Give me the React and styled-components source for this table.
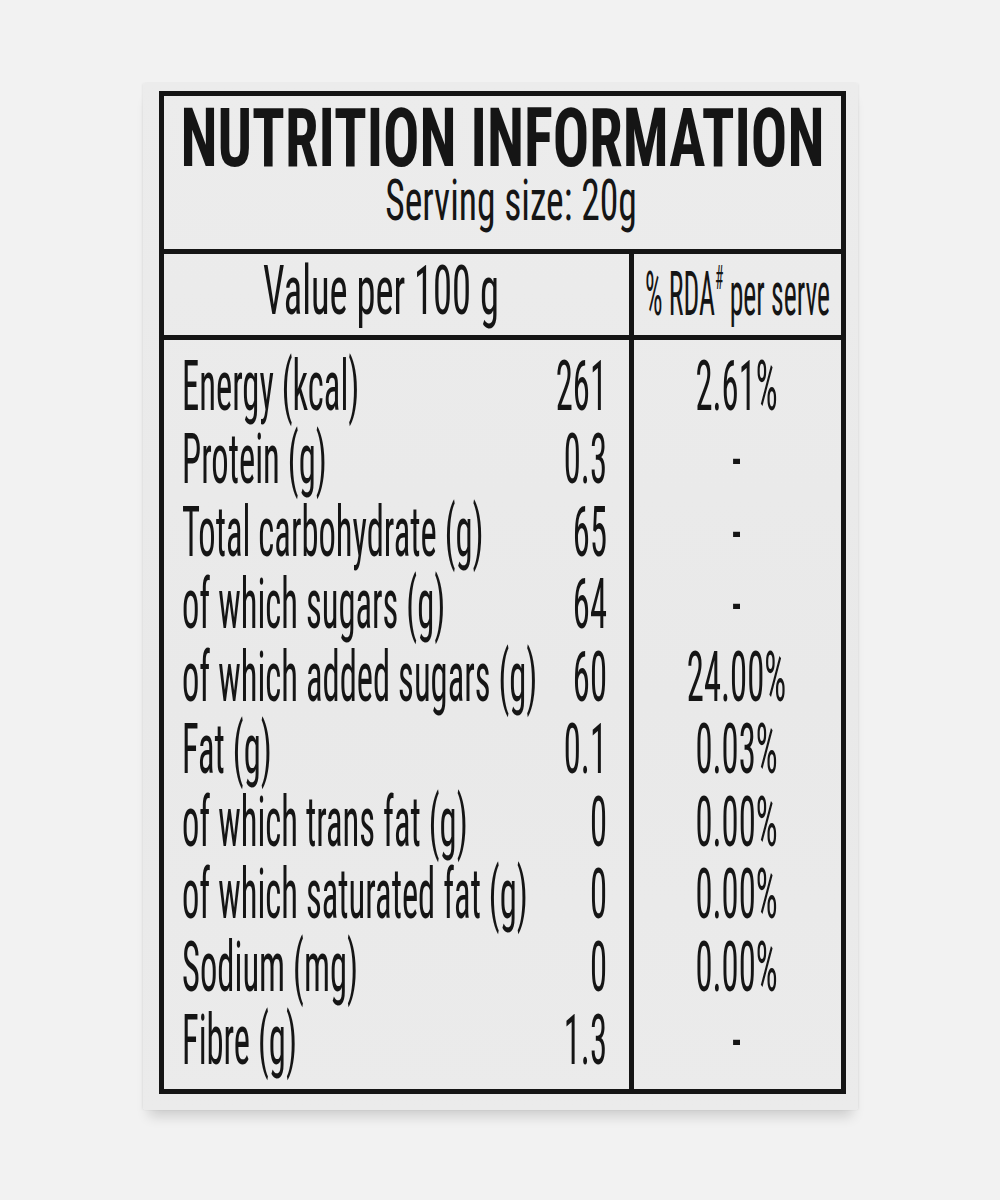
import React from "react";
import styled, { createGlobalStyle, css } from "styled-components";

const INK = "#151515";
const CAP = 0.711;
/* line box = 0.8em; baseline sits 0.7418em below the box top */
const LH = 0.8;
const baseOf = (f) => f * (LH / 2 + 0.3418);

const condensed = (f, cap, w = 400) => css`
  display: block;
  font-family: Roboto, "Liberation Sans", Arial, sans-serif;
  font-stretch: 75%;
  font-weight: ${w};
  font-size: ${f}px;
  line-height: ${(f * LH).toFixed(2)}px;
  height: ${(f * LH).toFixed(2)}px;
  white-space: nowrap;
  color: ${INK};
  transform: scaleY(${(cap / (CAP * f)).toFixed(4)});
  transform-origin: 50% ${baseOf(f).toFixed(2)}px;
`;

/* metrics */
const FRAME_TOP = 96;
const TF = 60.5, T_BASE = 167;
const SF = 37.6, S_BASE = 220;
const T_TOP = T_BASE - baseOf(TF);
const S_TOP = S_BASE - baseOf(SF);

const HEAD_TOP = 254;
const HF = 38.5, H_BASE = 315;
const RF = 27.7, R_BASE = 317;

const BODY_TOP = 340;
const ROWF = 34.6, ROWL = 72.6, ROW_BASE = 412;
const TEXT_W = 430;

const GlobalStyle = createGlobalStyle`
  html, body { margin: 0; padding: 0; }
  body { background: #f2f2f2; }
  * { box-sizing: border-box; }
`;

const Page = styled.div`
  min-height: 1200px;
  width: 1000px;
  background: #f2f2f2;
  padding: 83px 0 0 143px;
`;

const Card = styled.div`
  width: 715px;
  height: 1027px;
  padding: 8px 12px 16px 16px;
  background: linear-gradient(180deg, #ececec 0%, #e9e9e9 60%, #ebebeb 100%);
  border-radius: 3px;
  box-shadow:
    0 12px 12px -6px rgba(0, 0, 0, 0.16),
    -1px 0 2px rgba(0, 0, 0, 0.05),
    1px 0 2px rgba(0, 0, 0, 0.05);
`;

const Frame = styled.div`
  height: 100%;
  border: 5px solid ${INK};
  display: flex;
  flex-direction: column;
`;

const TitleBlock = styled.header`
  height: 158px;
  flex-shrink: 0;
  border-bottom: 5px solid ${INK};
  padding-top: ${(T_TOP - FRAME_TOP).toFixed(2)}px;
  text-align: center;
`;

const Title = styled.h1`
  margin: 0;
  ${condensed(TF, 58, 700)}
`;

const Serving = styled.div`
  margin-top: ${(S_TOP - (T_TOP + TF * LH)).toFixed(2)}px;
  padding-left: 17px;
  ${condensed(SF, 41, TEXT_W)}
`;

const Table = styled.div`
  flex: 1;
  display: flex;
  min-height: 0;
`;

const Column = styled.div`
  display: flex;
  flex-direction: column;
  ${(p) =>
    p.$name
      ? css`
          width: 470px;
          flex-shrink: 0;
          border-right: 5px solid ${INK};
        `
      : css`
          flex: 1;
          min-width: 0;
        `}
`;

const HeadCell = styled.div`
  height: 86px;
  flex-shrink: 0;
  border-bottom: 5px solid ${INK};
`;

const NameHead = styled.div`
  margin-top: ${(H_BASE - baseOf(HF) - HEAD_TOP).toFixed(2)}px;
  padding-left: 99px;
  ${condensed(HF, 49, TEXT_W)}
`;

const RdaHead = styled.div`
  margin-top: ${(R_BASE - baseOf(RF) - HEAD_TOP).toFixed(2)}px;
  text-align: center;
  ${condensed(RF, 44, TEXT_W)}
`;

const Sup = styled.sup`
  font-size: 0.55em;
  line-height: 0;
  vertical-align: 0;
  position: relative;
  top: -0.8em;
`;

const List = styled.ul`
  list-style: none;
  margin: 0;
  padding: ${(ROW_BASE - baseOf(ROWF) - BODY_TOP).toFixed(2)}px 0 0;
`;

const NameRow = styled.li`
  display: flex;
  justify-content: space-between;
  align-items: flex-start;
  padding: 0 22px 0 18px;
  height: ${ROWL}px;
`;

const Label = styled.span`
  ${condensed(ROWF, 50, TEXT_W)}
`;

const Amount = styled.span`
  ${condensed(ROWF, 50, TEXT_W)}
`;

const RdaRow = styled.li`
  height: ${ROWL}px;
`;

const RdaValue = styled.span`
  text-align: center;
  padding-right: 2px;
  ${condensed(ROWF, 50, TEXT_W)}
`;

const rows = [
  ["Energy (kcal)", "261", "2.61%"],
  ["Protein (g)", "0.3", "-"],
  ["Total carbohydrate (g)", "65", "-"],
  ["of which sugars (g)", "64", "-"],
  ["of which added sugars (g)", "60", "24.00%"],
  ["Fat (g)", "0.1", "0.03%"],
  ["of which trans fat (g)", "0", "0.00%"],
  ["of which saturated fat (g)", "0", "0.00%"],
  ["Sodium (mg)", "0", "0.00%"],
  ["Fibre (g)", "1.3", "-"],
];

export default function App() {
  return (
    <>
      <GlobalStyle />
      <Page>
        <Card>
          <Frame>
            <TitleBlock>
              <Title>NUTRITION INFORMATION</Title>
              <Serving>Serving size: 20g</Serving>
            </TitleBlock>
            <Table>
              <Column $name>
                <HeadCell>
                  <NameHead>Value per 100 g</NameHead>
                </HeadCell>
                <List>
                  {rows.map(([name, value]) => (
                    <NameRow key={name}>
                      <Label>{name}</Label>
                      <Amount>{value}</Amount>
                    </NameRow>
                  ))}
                </List>
              </Column>
              <Column>
                <HeadCell>
                  <RdaHead>
                    % RDA<Sup>#</Sup> per serve
                  </RdaHead>
                </HeadCell>
                <List>
                  {rows.map(([name, , rda]) => (
                    <RdaRow key={name}>
                      <RdaValue>{rda}</RdaValue>
                    </RdaRow>
                  ))}
                </List>
              </Column>
            </Table>
          </Frame>
        </Card>
      </Page>
    </>
  );
}
